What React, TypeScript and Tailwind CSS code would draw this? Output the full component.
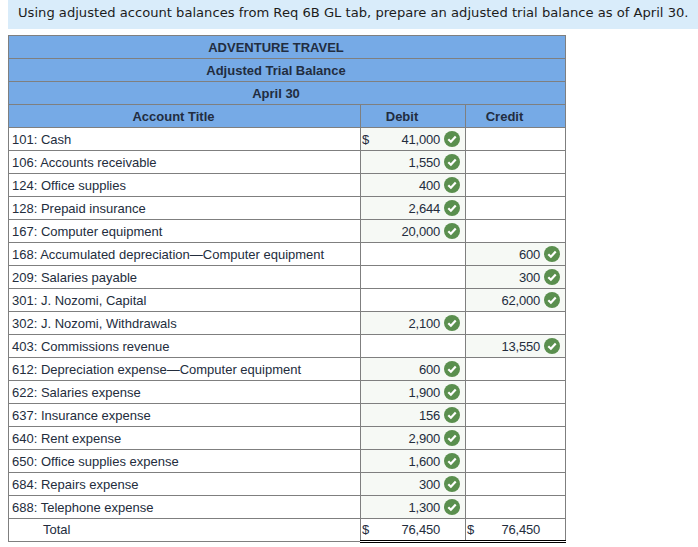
// Adjusted trial balance worksheet

const rows = [
  { title: '101: Cash', debit: '41,000', dollar: true },
  { title: '106: Accounts receivable', debit: '1,550' },
  { title: '124: Office supplies', debit: '400' },
  { title: '128: Prepaid insurance', debit: '2,644' },
  { title: '167: Computer equipment', debit: '20,000' },
  { title: '168: Accumulated depreciation—Computer equipment', credit: '600' },
  { title: '209: Salaries payable', credit: '300' },
  { title: '301: J. Nozomi, Capital', credit: '62,000' },
  { title: '302: J. Nozomi, Withdrawals', debit: '2,100' },
  { title: '403: Commissions revenue', credit: '13,550' },
  { title: '612: Depreciation expense—Computer equipment', debit: '600' },
  { title: '622: Salaries expense', debit: '1,900' },
  { title: '637: Insurance expense', debit: '156' },
  { title: '640: Rent expense', debit: '2,900' },
  { title: '650: Office supplies expense', debit: '1,600' },
  { title: '684: Repairs expense', debit: '300' },
  { title: '688: Telephone expense', debit: '1,300' },
]

function Check() {
  return (
    <svg width="16" height="16" viewBox="0 0 16 16" className="shrink-0">
      <circle cx="8" cy="8" r="8" fill="#5a8f4e" />
      <path d="M4.3 8.3 L6.9 10.8 L11.7 5.6" fill="none" stroke="#fff" strokeWidth="2.2" />
    </svg>
  )
}

function Amount({ value, dollar }: { value?: string; dollar?: boolean }) {
  if (!value) return null
  return (
    <div className="flex h-full items-center pl-[1px] pr-[5px]">
      {dollar && <span className="pt-[2px]">$</span>}
      <span className="ml-auto mr-[4px] pt-[2px] tracking-[-0.22px]">{value}</span>
      <Check />
    </div>
  )
}

function TotalCell() {
  return (
    <td className="h-[23px] border-x border-t border-b-[3px] border-x-[#7f7f7f] border-t-black border-b-black p-0 [border-bottom-style:double]">
      <div className="flex items-center pl-[1px] pr-[25px]">
        <span>$</span>
        <span className="ml-auto tracking-[-0.22px]">76,450</span>
      </div>
    </td>
  )
}

export default function App() {
  const cell = 'h-[23px] border border-[#7f7f7f] p-0'
  const head = cell + ' bg-[#76aae6] pr-[22px] pt-[1px] text-center font-bold text-[#222d40]'

  return (
    <div className="h-[547px] w-[698px] overflow-hidden bg-white pl-2">
      <div className="flex h-[29px] items-center whitespace-nowrap bg-[#d9ecfa] pb-[3px] pl-[10px] font-['DejaVu_Sans',sans-serif] text-[13.12px] text-[#1c1c1c]">
        Using adjusted account balances from Req 6B GL tab, prepare an adjusted trial balance as of April 30.
      </div>

      <table className="mt-[6px] w-[557px] table-fixed border-collapse font-['Liberation_Sans',sans-serif] text-[13px] text-[#232d3d]">
        <colgroup>
          <col className="w-[352px]" />
          <col className="w-[105px]" />
          <col className="w-[100px]" />
        </colgroup>
        <thead>
          <tr>
            <th colSpan={3} className={head}>ADVENTURE TRAVEL</th>
          </tr>
          <tr>
            <th colSpan={3} className={head}>Adjusted Trial Balance</th>
          </tr>
          <tr>
            <th colSpan={3} className={head}>April 30</th>
          </tr>
          <tr>
            <th className={head}>Account Title</th>
            <th className={head}>Debit</th>
            <th className={head}>Credit</th>
          </tr>
        </thead>
        <tbody>
          {rows.map((r) => (
            <tr key={r.title}>
              <td className={cell + ' pl-[3px] pt-[2px]'}>{r.title}</td>
              <td className={cell + (r.debit ? ' bg-[#f6f9f5]' : '')}>
                <Amount value={r.debit} dollar={r.dollar} />
              </td>
              <td className={cell + (r.credit ? ' bg-[#f6f9f5]' : '')}>
                <Amount value={r.credit} />
              </td>
            </tr>
          ))}
          <tr>
            <td className={cell + ' pl-[34px]'}>Total</td>
            <TotalCell />
            <TotalCell />
          </tr>
        </tbody>
      </table>
    </div>
  )
}
